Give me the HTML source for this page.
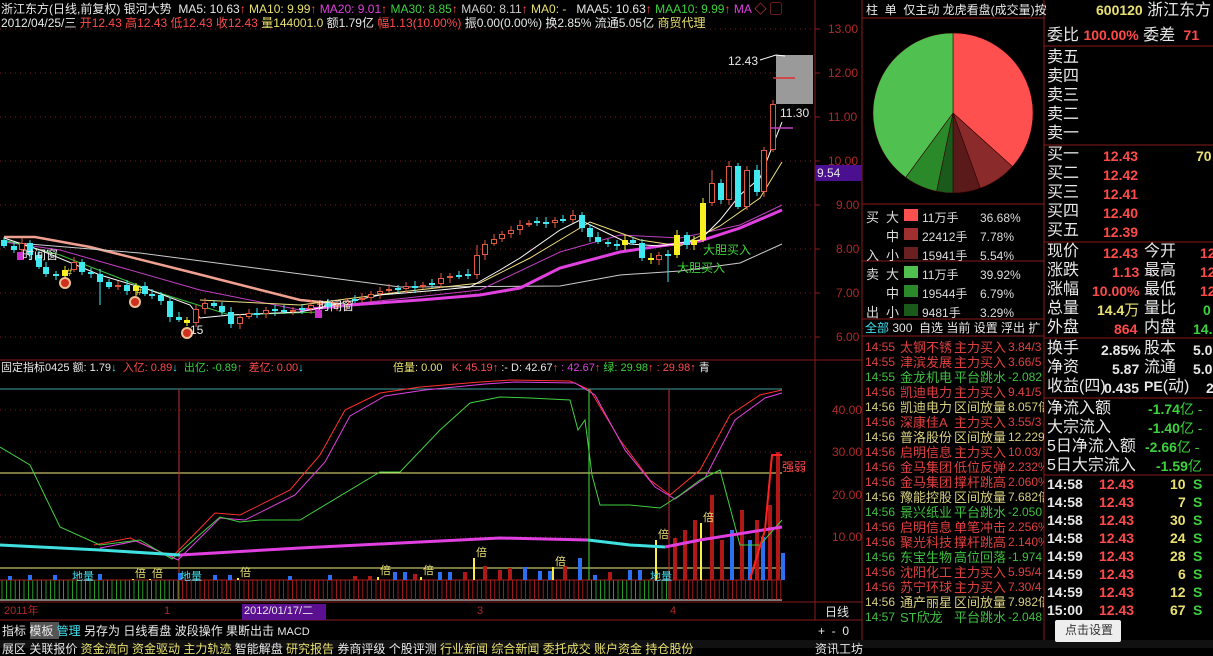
<!DOCTYPE html>
<html><head><meta charset="utf-8">
<style>
*{margin:0;padding:0;box-sizing:border-box}
body{width:1213px;height:648px;background:#000;overflow:hidden;position:relative;font-family:"Liberation Sans","Noto Sans CJK SC",sans-serif;color:#ddd}
.t{position:absolute;white-space:nowrap;line-height:1}
.s12{font-size:12px}.s11{font-size:11px}
.w{color:#e8e8e8}.r{color:#ff4a4a}.g{color:#3cd23c}.y{color:#e8e070}.m{color:#e040e0}.c{color:#40e0f0}.dr{color:#b02828}
.big{font-size:16px}
.num{font-weight:bold;font-size:14px}
</style></head><body>
<svg id="sv" width="1213" height="648" style="position:absolute;left:0;top:0">
<g stroke="#7a1a1a" stroke-dasharray="1,4">
<line x1="0" y1="29" x2="815" y2="29"/><line x1="0" y1="73" x2="815" y2="73"/><line x1="0" y1="117" x2="815" y2="117"/><line x1="0" y1="161" x2="815" y2="161"/><line x1="0" y1="205" x2="815" y2="205"/><line x1="0" y1="249" x2="815" y2="249"/><line x1="0" y1="293" x2="815" y2="293"/><line x1="0" y1="337" x2="815" y2="337"/>
<line x1="0" y1="410" x2="815" y2="410"/><line x1="0" y1="452" x2="815" y2="452"/><line x1="0" y1="495" x2="815" y2="495"/><line x1="0" y1="537" x2="815" y2="537"/>
</g>
<line x1="815" y1="0" x2="815" y2="620" stroke="#8a1c1c"/>
<line x1="862" y1="0" x2="862" y2="648" stroke="#8a1c1c"/>
<line x1="0" y1="360" x2="862" y2="360" stroke="#8a1c1c"/>
<line x1="0" y1="602" x2="862" y2="602" stroke="#8a1c1c"/>
<line x1="0" y1="620" x2="862" y2="620" stroke="#8a1c1c"/>
<g stroke="#8a1c1c"><line x1="815" y1="29" x2="820" y2="29"/><line x1="815" y1="73" x2="820" y2="73"/><line x1="815" y1="117" x2="820" y2="117"/><line x1="815" y1="161" x2="820" y2="161"/><line x1="815" y1="205" x2="820" y2="205"/><line x1="815" y1="249" x2="820" y2="249"/><line x1="815" y1="293" x2="820" y2="293"/><line x1="815" y1="337" x2="820" y2="337"/></g>
<g fill="none">
<polyline stroke="#f0a090" stroke-width="2.5" points="4,237 35,237 90,247 190,272 300,300 340,304"/>
<polyline stroke="#cccccc" points="4,242 140,253 400,287 560,286 620,275 680,271 740,263 782,244"/>
<polyline stroke="#c040c0" points="4,242 60,250 200,290 300,310 360,303 480,290 560,252 620,235 680,238 740,225 782,205"/>
<polyline stroke="#40c040" points="4,240 60,255 150,290 230,315 320,312"/>
<polyline stroke="#e040e0" stroke-width="3" points="300,310 350,305 420,300 480,295 520,288 560,268 620,252 660,246 700,241 740,228 782,210"/>
<polyline stroke="#f0e080" points="200,300 300,305 400,292 480,283 530,258 560,240 590,222 640,240 680,246 720,226 760,198 782,162"/>
<polyline stroke="#ffffff" points="4,238 40,250 100,275 150,290 190,305 200,318 230,315 300,312 380,295 440,290 470,287 500,270 520,258 560,230 580,220 630,244 660,246 700,240 720,220 740,195 760,178 782,122"/>
</g>
<g id="cand"></g>
<rect x="776" y="55" width="37" height="49" fill="#9a9a9a"/>
<line x1="773" y1="78" x2="795" y2="78" stroke="#e03030" stroke-width="1.5"/>
<line x1="770" y1="128" x2="793" y2="128" stroke="#c040c0" stroke-width="1.5"/>
<polyline points="760,60 776,55 785,56" fill="none" stroke="#fff"/>
<rect x="815" y="165" width="47" height="16" fill="#4a1090"/>
<g><circle cx="65" cy="283" r="6" fill="#f0c090"/><circle cx="65" cy="283" r="4" fill="#d03020"/>
<circle cx="135" cy="302" r="6" fill="#f0c090"/><circle cx="135" cy="302" r="4" fill="#d03020"/>
<circle cx="187" cy="333" r="6" fill="#f0c090"/><circle cx="187" cy="333" r="4" fill="#d03020"/></g>
<rect x="17" y="252" width="7" height="8" fill="#d030d0"/><rect x="315" y="310" width="7" height="8" fill="#d030d0"/>
<line x1="0" y1="389" x2="782" y2="389" stroke="#40a0a0"/>
<line x1="0" y1="473" x2="782" y2="473" stroke="#f0f080"/>
<line x1="0" y1="568" x2="782" y2="568" stroke="#f0f080"/>
<line x1="0" y1="600" x2="782" y2="600" stroke="#eee"/>
<line x1="179" y1="389" x2="179" y2="600" stroke="#c03030"/>
<line x1="669" y1="389" x2="669" y2="600" stroke="#c03030"/>
<g id="hatch"></g>
<g id="bars"></g>
<g fill="none" stroke-width="1">
<polyline stroke="#ff3030" points="94,545 130,538 172,557 215,513 240,515 290,490 320,455 345,410 380,393 420,387 480,382 510,380 570,381 590,390 620,440 650,480 670,495 700,470 730,415 760,395 782,390"/>
<polyline stroke="#e040e0" points="100,548 136,541 178,560 220,518 245,520 295,495 325,462 350,416 385,396 425,390 485,384 515,382 575,383 595,395 625,450 655,487 675,499 705,478 735,420 765,398 782,393"/>
<polyline stroke="#40d040" points="0,447 30,465 60,527 100,545 140,540 172,559 220,517 240,522 260,520 300,520 380,472 400,472 440,430 470,403 500,397 530,398 570,400 578,430 585,420 592,475 600,505 630,505 660,508 680,495 700,480 720,470 740,545 760,545 782,520"/>
<polyline stroke="#40e0e0" stroke-width="3" points="0,545 100,550 180,555"/>
<polyline stroke="#e040e0" stroke-width="3" points="180,555 300,548 400,543 500,538 588,540"/>
<polyline stroke="#40e0e0" stroke-width="3" points="588,540 630,545 665,547"/>
<polyline stroke="#e040e0" stroke-width="3" points="665,547 700,540 782,527"/>
<line x1="589" y1="389" x2="589" y2="580" stroke="#40e040"/>
<polyline stroke="#ff2020" stroke-width="2" points="750,579 765,530 772,455 782,455"/>
</g>
<g transform="translate(953,113)" stroke="#300" stroke-width="0.6" id="pie"></g>
<g stroke="#8a1c1c">
<line x1="1044" y1="0" x2="1044" y2="640"/>
<line x1="862" y1="18" x2="1044" y2="18"/>
<line x1="862" y1="204" x2="1044" y2="204"/>
<line x1="862" y1="261" x2="1044" y2="261"/>
<line x1="862" y1="319" x2="1044" y2="319"/>
<line x1="862" y1="336" x2="1044" y2="336"/>
<line x1="1044" y1="46" x2="1213" y2="46"/>
<line x1="1044" y1="145" x2="1213" y2="145"/>
<line x1="1044" y1="242" x2="1213" y2="242"/>
<line x1="1044" y1="338" x2="1213" y2="338"/>
<line x1="1044" y1="398" x2="1213" y2="398"/>
<line x1="1044" y1="475" x2="1213" y2="475"/>
</g>
<rect x="904" y="209" width="14" height="12" fill="#ff5050"/>
<rect x="904" y="228" width="14" height="12" fill="#a03030"/>
<rect x="904" y="247" width="14" height="12" fill="#6a2020"/>
<rect x="904" y="266" width="14" height="12" fill="#50c050"/>
<rect x="904" y="285" width="14" height="12" fill="#2a8a2a"/>
<rect x="904" y="304" width="14" height="12" fill="#1a5a1a"/>
<rect x="242" y="604" width="84" height="16" fill="#5a1090"/>
<rect x="30" y="622" width="29" height="17" fill="#555"/>
<rect x="0" y="640" width="1213" height="8" fill="#111"/>
<rect x="1055" y="620" width="66" height="22" fill="#eee" rx="2"/>
</svg>

<div class="t s12" style="left:1px;top:3px"><span class="w">浙江东方(日线,前复权) 银河大势 &nbsp;MA5: 10.63</span><span class="r">↑</span> <span class="y">MA10: 9.99</span><span class="r">↑</span> <span class="m">MA20: 9.01</span><span class="r">↑</span> <span class="g">MA30: 8.85</span><span class="r">↑</span> <span style="color:#ccc">MA60: 8.11</span><span class="r">↑</span> <span class="y">MA0: -</span> &nbsp; <span class="w">MAA5: 10.63</span><span class="r">↑</span> <span class="g">MAA10: 9.99</span><span class="r">↑</span> <span class="m">MA</span><span class="r"> ◇ ▢</span></div>
<div class="t s12" style="left:1px;top:17px"><span class="w">2012/04/25/三 </span><span class="r">开12.43 高12.43 低12.43 收12.43 </span><span class="y">量144001.0 </span><span class="w">额1.79亿 </span><span class="r">幅1.13(10.00%) </span><span class="w">振0.00(0.00%) 换2.85% 流通5.05亿 </span><span class="y">商贸代理</span></div>

<div class="t s12 dr" style="left:828px;top:23px">13.00</div><div class="t s12 dr" style="left:828px;top:67px">12.00</div><div class="t s12 dr" style="left:828px;top:111px">11.00</div><div class="t s12 dr" style="left:828px;top:155px">10.00</div><div class="t s12 dr" style="left:836px;top:199px">9.00</div><div class="t s12 dr" style="left:836px;top:243px">8.00</div><div class="t s12 dr" style="left:836px;top:287px">7.00</div><div class="t s12 dr" style="left:836px;top:331px">6.00</div>
<div class="t s12 w" style="left:817px;top:167px">9.54</div>
<div class="t s12 w" style="left:728px;top:55px">12.43</div>
<div class="t s12 w" style="left:780px;top:107px">11.30</div>
<div class="t s12 w" style="left:22px;top:249px">时间窗</div>
<div class="t s12 w" style="left:318px;top:300px">时间窗</div>
<div class="t s12 g" style="left:703px;top:244px">大胆买入</div>
<div class="t s12 g" style="left:677px;top:262px">大胆买入</div>
<div class="t s12 w" style="left:190px;top:324px">15</div>
<div class="t s11" style="left:66px;top:268px;color:#f0e060">#</div><div class="t s11" style="left:136px;top:287px;color:#f0e060">#</div>

<div class="t s11" style="left:1px;top:363px"><span class="w">固定指标0425 额: 1.79</span><span class="c">↓</span> &nbsp;<span class="r">入亿: 0.89</span><span class="c">↓</span> &nbsp;<span class="g">出亿: -0.89</span><span class="r">↑</span> &nbsp;<span class="r">差亿: 0.00</span><span class="c">↓</span></div>
<div class="t s11" style="left:393px;top:363px"><span class="y">倍量: 0.00</span> &nbsp;&nbsp;<span class="r">K: 45.19</span><span class="r">↑</span> <span class="w">:- D: 42.67</span><span class="r">↑</span> <span class="m">: 42.67</span><span class="r">↑</span> <span class="g">绿: 29.98</span><span class="r">↑</span> <span class="r">: 29.98</span><span class="r">↑</span> <span class="w">青</span></div>
<div class="t s12 dr" style="left:832px;top:404px">40.00</div><div class="t s12 dr" style="left:832px;top:446px">30.00</div><div class="t s12 dr" style="left:832px;top:489px">20.00</div><div class="t s12 dr" style="left:832px;top:531px">10.00</div>
<div class="t s12 r" style="left:782px;top:461px">强弱</div>
<div class="t s11 c" style="left:72px;top:572px">地量</div><div class="t s11 c" style="left:180px;top:572px">地量</div><div class="t s11 c" style="left:650px;top:572px">地量</div>
<div class="t s11 y" style="left:135px;top:569px">倍</div><div class="t s11 y" style="left:152px;top:569px">倍</div><div class="t s11 y" style="left:240px;top:568px">倍</div><div class="t s11 y" style="left:380px;top:566px">倍</div><div class="t s11 y" style="left:423px;top:566px">倍</div><div class="t s11 y" style="left:476px;top:548px">倍</div><div class="t s11 y" style="left:555px;top:557px">倍</div><div class="t s11 y" style="left:658px;top:530px">倍</div><div class="t s11 y" style="left:703px;top:513px">倍</div>

<div class="t s11 dr" style="left:4px;top:606px">2011年</div>
<div class="t s11 dr" style="left:164px;top:606px">1</div>
<div class="t s11 w" style="left:244px;top:606px">2012/01/17/二</div>
<div class="t s11 dr" style="left:477px;top:606px">3</div>
<div class="t s11 dr" style="left:670px;top:606px">4</div>
<div class="t s12 w" style="left:825px;top:606px">日线</div>
<div class="t s12" style="left:2px;top:625px"><span class="w">指标 模板 </span><span class="c">管理</span><span class="w"> 另存为 日线看盘 波段操作 果断出击 </span><span class="w s11">MACD</span></div>
<div class="t s12 w" style="left:818px;top:625px">+ &nbsp;- &nbsp;0</div>
<div class="t s12" style="left:2px;top:643px"><span class="w">展区 关联报价 </span><span class="y">资金流向 资金驱动 主力轨迹 </span><span class="w">智能解盘 </span><span class="y">研究报告 </span><span class="w">券商评级 个股评测 </span><span class="y">行业新闻 综合新闻 委托成交 账户资金 持仓股份</span></div>
<div class="t s12 w" style="left:815px;top:643px">资讯工坊</div>

<div class="t s12 w" style="left:866px;top:4px">柱 &nbsp;单 &nbsp;仅主动 龙虎看盘(成交量)按</div>
<div class="t big" style="left:1096px;top:3px"><span class="y" style="font-weight:bold;font-size:14px">600120</span> <span class="w">浙江东方</span></div>
<div class="t big w" style="left:1047px;top:28px">委比 <span class="r num">100.00%</span> 委差 <span class="r num">&nbsp;71</span></div>
<div class="t big w" style="left:1047px;top:50px">卖五</div><div class="t big w" style="left:1047px;top:69px">卖四</div><div class="t big w" style="left:1047px;top:88px">卖三</div><div class="t big w" style="left:1047px;top:107px">卖二</div><div class="t big w" style="left:1047px;top:126px">卖一</div>
<div class="t big w" style="left:1047px;top:147px">买一</div><div class="t big w" style="left:1047px;top:166px">买二</div><div class="t big w" style="left:1047px;top:185px">买三</div><div class="t big w" style="left:1047px;top:204px">买四</div><div class="t big w" style="left:1047px;top:223px">买五</div>
<div class="t num r" style="left:1103px;top:149px">12.43</div><div class="t num r" style="left:1103px;top:168px">12.42</div><div class="t num r" style="left:1103px;top:187px">12.41</div><div class="t num r" style="left:1103px;top:206px">12.40</div><div class="t num r" style="left:1103px;top:225px">12.39</div>
<div class="t num y" style="left:1196px;top:149px">70</div>
<div class="t big w" style="left:1047px;top:244px">现价</div><div class="t big w" style="left:1047px;top:263px">涨跌</div><div class="t big w" style="left:1047px;top:282px">涨幅</div><div class="t big w" style="left:1047px;top:301px">总量</div><div class="t big w" style="left:1047px;top:320px">外盘</div>
<div class="t big w" style="left:1144px;top:244px">今开</div><div class="t big w" style="left:1144px;top:263px">最高</div><div class="t big w" style="left:1144px;top:282px">最低</div><div class="t big w" style="left:1144px;top:301px">量比</div><div class="t big w" style="left:1144px;top:320px">内盘</div>
<div class="t num r" style="left:1103px;top:246px">12.43</div><div class="t num r" style="left:1112px;top:265px">1.13</div><div class="t num r" style="left:1092px;top:284px">10.00%</div><div class="t num y" style="left:1097px;top:303px">14.4<span style="font-weight:normal;font-size:15px">万</span></div><div class="t num r" style="left:1114px;top:322px">864</div>
<div class="t num r" style="left:1200px;top:246px">12</div><div class="t num r" style="left:1200px;top:265px">12</div><div class="t num r" style="left:1200px;top:284px">12</div><div class="t num g" style="left:1203px;top:303px">0</div><div class="t num g" style="left:1193px;top:322px">14.</div>
<div class="t big w" style="left:1047px;top:341px">换手</div><div class="t big w" style="left:1047px;top:360px">净资</div><div class="t big w" style="left:1047px;top:379px">收益(四)</div>
<div class="t num w" style="left:1101px;top:343px">2.85%</div><div class="t num w" style="left:1112px;top:362px">5.87</div><div class="t num w" style="left:1104px;top:381px">0.435</div>
<div class="t big w" style="left:1144px;top:341px">股本</div><div class="t big w" style="left:1144px;top:360px">流通</div><div class="t big w" style="left:1144px;top:379px"><b style="font-size:14px">PE</b>(动)</div>
<div class="t num w" style="left:1193px;top:343px">5.0</div><div class="t num w" style="left:1193px;top:362px">5.0</div><div class="t num w" style="left:1206px;top:381px">2</div>
<div class="t big w" style="left:1047px;top:401px">净流入额</div><div class="t big w" style="left:1047px;top:420px">大宗流入</div><div class="t big w" style="left:1047px;top:439px">5日净流入额</div><div class="t big w" style="left:1047px;top:458px">5日大宗流入</div>
<div class="t g" style="left:1148px;top:402px;font-size:14px"><b>-1.74</b>亿 -</div><div class="t g" style="left:1148px;top:421px;font-size:14px"><b>-1.40</b>亿 -</div><div class="t g" style="left:1145px;top:440px;font-size:14px"><b>-2.66</b>亿 -</div><div class="t g" style="left:1156px;top:459px;font-size:14px"><b>-1.59</b>亿</div>
<div id="ticks"></div>

<div class="t" style="left:866px;top:208px;font-size:13px;line-height:19px;color:#ddd">买<br><br>入<br>卖<br><br>出</div>
<div class="t" style="left:886px;top:208px;font-size:13px;line-height:19px;color:#ddd">大<br>中<br>小<br>大<br>中<br>小</div>
<div class="t" style="left:922px;top:209px;font-size:12px;line-height:19px;color:#ddd">11万手<br>22412手<br>15941手<br>11万手<br>19544手<br>9481手</div>
<div class="t" style="left:980px;top:209px;font-size:12px;line-height:19px;color:#ddd">36.68%<br>7.78%<br>5.54%<br>39.92%<br>6.79%<br>3.29%</div>
<div class="t s12" style="left:865px;top:322px"><span class="c">全部</span><span class="w"> 300 &nbsp;自选 当前 设置 浮出 扩</span></div>
<div id="list"></div>
<div class="t" style="left:1065px;top:624px;font-size:12px;color:#333">点击设置</div>

<script>
var NS="http://www.w3.org/2000/svg";
function el(p,n,a){var e=document.createElementNS(NS,n);for(var k in a)e.setAttribute(k,a[k]);p.appendChild(e);return e;}
var P=[[4,246],[14,250],[22,243],[30,255],[39,267],[46,274],[56,276],[65,270,'y'],[74,262],[82,272],[91,274],[100,282],[109,287],[118,285],[127,291],[136,286,'y'],[145,294],[152,295],[161,301],[170,317],[179,320],[187,323,'y'],[196,309],[205,303],[214,306],[222,312],[231,324],[240,317],[249,313],[257,314],[266,310],[275,310],[284,312],[293,310],[302,309],[311,305],[320,303],[328,307],[337,305],[346,301],[355,300],[362,298],[371,294],[380,291],[389,289],[398,289],[406,286],[415,287],[423,285],[432,284],[441,278],[450,276],[459,276],[468,275],[477,255],[485,244],[494,239],[502,234],[511,230],[520,225],[529,223],[537,222],[546,223],[555,220],[563,220],[573,215],[582,228],[590,237],[598,242],[608,244],[617,245],[625,240,'y'],[633,243],[642,258],[651,260,'y'],[659,255],[668,255],[677,235,'y'],[687,245],[694,240,'y'],[703,203,'y'],[712,183],[721,200],[729,166],[738,207],[747,170],[757,192],[764,150],[773,104]];
var g=document.getElementById('cand'),prev=240;
P.forEach(function(p,i){var x=p[0],c=p[1],o=prev;if(Math.abs(c-o)<2){o=c-1;}
var top=Math.min(o,c),h=Math.max(2,Math.abs(c-o));var hi=top-3-(i%3),lo=top+h+2+(i%4);
if(x==100)lo=305;if(x==477)hi=245;if(x==712)hi=170;if(x==668)lo=282;
var col=p[2]=='y'?'#f8f020':(c<o?'#e05a40':'#40e8f0');
el(g,'line',{x1:x,y1:hi,x2:x,y2:lo,stroke:col});
if(p[2]=='y'||c>=o)el(g,'rect',{x:x-3,y:top,width:6,height:h,fill:col});
else el(g,'rect',{x:x-2.5,y:top+.5,width:5,height:h-1,fill:'#000',stroke:col});
prev=c;});
var hg=document.getElementById('hatch');
for(var x=2;x<782;x+=4.4){var gr=(x<180)||(x>589&&x<668);el(hg,'line',{x1:x,y1:580,x2:x,y2:600,stroke:gr?'#30c030':'#c02020','stroke-width':0.8});}
el(hg,'line',{x1:0,y1:580,x2:782,y2:580,stroke:'#b02020'});
var bg=document.getElementById('bars');
var B=[[10,576,'b'],[30,575,'b'],[55,575,'b'],[100,574,'b'],[180,573,'b'],[215,575,'b'],[230,575,'b'],[290,576,'b'],[330,575,'b'],[355,576,'r'],[370,576,'r'],[395,572,'b'],[405,572,'b'],[415,574,'r'],[440,572,'b'],[450,572,'b'],[465,572,'r'],[485,566,'r'],[500,570,'r'],[510,568,'r'],[525,567,'b'],[540,571,'b'],[550,571,'b'],[565,566,'r'],[580,558,'b'],[595,575,'b'],[610,572,'r'],[630,570,'b'],[640,570,'b'],[675,538,'r'],[685,530,'r'],[695,520,'r'],[712,495,'r'],[722,540,'r'],[732,530,'b'],[742,510,'r'],[750,540,'b'],[757,520,'r'],[763,537,'b'],[770,505,'r'],[778,452,'r'],[783,553,'b']];
B.forEach(function(b){el(bg,'rect',{x:b[0]-2,y:b[1],width:4,height:580-b[1],fill:b[2]=='b'?'#2a70f0':'#b01818'});});
[[135,569],[152,569],[240,568],[380,567],[423,567],[476,548],[555,557],[658,530],[703,513]].forEach(function(q){el(bg,'rect',{x:q[0]-3,y:q[1]+10,width:2,height:580-q[1]-10,fill:'#f8f040'});});
var pg=document.getElementById('pie'),R=80,a=0;
[[36.68,'#ff5050'],[7.78,'#8a2a2a'],[5.54,'#5a1a1a'],[3.29,'#1a5a1a'],[6.79,'#2a8a2a'],[39.92,'#50c050']].forEach(function(s){var a2=a+s[0]/100*2*Math.PI;
var x1=R*Math.sin(a),y1=-R*Math.cos(a),x2=R*Math.sin(a2),y2=-R*Math.cos(a2);
el(pg,'path',{d:'M0,0L'+x1+','+y1+'A'+R+','+R+' 0 '+(a2-a>Math.PI?1:0)+' 1 '+x2+','+y2+'Z',fill:s[1]});a=a2;});
var L=[['14:55','太钢不锈','主力买入','3.84/3','r'],['14:55','津滨发展','主力买入','3.66/5','r'],['14:55','金龙机电','平台跳水','-2.082','g'],['14:56','凯迪电力','主力买入','9.41/5','r'],['14:56','凯迪电力','区间放量','8.057倍','y'],['14:56','深康佳A','主力买入','3.55/3','r'],['14:56','普洛股份','区间放量','12.229','y'],['14:56','启明信息','主力买入','10.03/','r'],['14:56','金马集团','低位反弹','2.232%','r'],['14:56','金马集团','撑杆跳高','2.060%','r'],['14:56','豫能控股','区间放量','7.682倍','y'],['14:56','景兴纸业','平台跳水','-2.050','g'],['14:56','启明信息','单笔冲击','2.256%','r'],['14:56','聚光科技','撑杆跳高','2.140%','r'],['14:56','东宝生物','高位回落','-1.974','g'],['14:56','沈阳化工','主力买入','5.95/4','r'],['14:56','苏宁环球','主力买入','7.30/4','r'],['14:56','通产丽星','区间放量','7.982倍','y'],['14:57','ST欣龙','平台跳水','-2.048','g']];
var col={r:'#e04040',g:'#40c040',y:'#d8d080'},h='';
L.forEach(function(r,i){var c=col[r[4]];var top=341+i*15;
h+='<div class="t" style="left:865px;top:'+top+'px;font-size:12px;color:'+c+'">'+r[0]+'</div><div class="t" style="left:900px;top:'+top+'px;font-size:13px;color:'+c+'">'+r[1]+'</div><div class="t" style="left:954px;top:'+top+'px;font-size:13px;color:'+c+'">'+r[2]+'</div><div class="t" style="left:1008px;top:'+top+'px;font-size:12px;color:'+c+';width:36px;overflow:hidden">'+r[3]+'</div>';});
document.getElementById('list').innerHTML=h;
var T=[['14:58','10'],['14:58','7'],['14:58','30'],['14:58','24'],['14:59','28'],['14:59','6'],['14:59','12'],['15:00','67']];h='';
T.forEach(function(r,i){var top=477+i*18;
h+='<div class="t num w" style="left:1047px;top:'+top+'px">'+r[0]+'</div><div class="t num r" style="left:1099px;top:'+top+'px">12.43</div><div class="t num y" style="left:'+(1186-r[1].length*8)+'px;top:'+top+'px">'+r[1]+'</div><div class="t num g" style="left:1193px;top:'+top+'px">S</div>';});
document.getElementById('ticks').innerHTML=h;
</script>
</body></html>
